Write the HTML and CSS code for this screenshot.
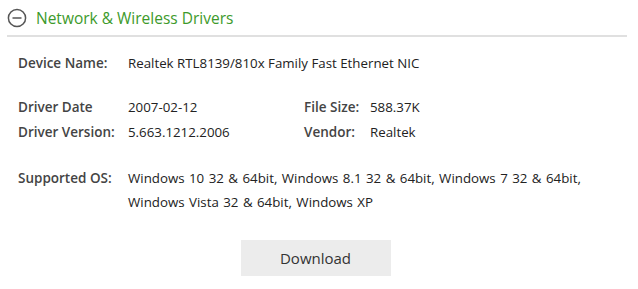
FILE: index.html
```html
<!DOCTYPE html>
<html lang="en">
<head>
    <meta charset="UTF-8">
    <title>Network & Wireless Drivers</title>
    <link rel="stylesheet" href="styles.css">
</head>
<body>
    <div class="driver-panel">
        <div class="panel-header">
            <svg class="toggle-icon" width="20" height="20" viewBox="0 0 20 20">
                <circle cx="10" cy="10" r="8.6" fill="none" stroke="#555" stroke-width="1.5"/>
                <line x1="5.5" y1="10" x2="14.5" y2="10" stroke="#555" stroke-width="1.5"/>
            </svg>
            <span class="panel-title">Network &amp; Wireless Drivers</span>
        </div>
        <div class="panel-body">
            <div class="info-row device-row">
                <span class="label">Device Name:</span>
                <span class="value">Realtek RTL8139/810x Family Fast Ethernet NIC</span>
            </div>
            <div class="info-grid">
                <span class="label">Driver Date</span>
                <span class="value">2007-02-12</span>
                <span class="label">File Size:</span>
                <span class="value">588.37K</span>
                <span class="label">Driver Version:</span>
                <span class="value">5.663.1212.2006</span>
                <span class="label">Vendor:</span>
                <span class="value">Realtek</span>
            </div>
            <div class="info-row os-row">
                <span class="label">Supported OS:</span>
                <span class="value">Windows 10 32 &amp; 64bit, Windows 8.1 32 &amp; 64bit, Windows 7 32 &amp; 64bit, Windows Vista 32 &amp; 64bit, Windows XP</span>
            </div>
            <div class="actions">
                <button class="download-button">Download</button>
            </div>
        </div>
    </div>
</body>
</html>
```

FILE: styles.css
```css
body, html {
    margin: 0;
    padding: 0;
    background-color: #fff;
    font-family: "Open Sans", "Noto Sans", Arial, sans-serif;
}
.driver-panel {
    width: 620px;
    padding: 0 0 0 7px;
}
.panel-header {
    display: flex;
    align-items: center;
    height: 35px;
    border-bottom: 2px solid #e0e0e0;
}
.toggle-icon {
    margin-right: 9px;
    margin-top: 1px;
}
.panel-title {
    color: #3d9a2b;
    font-size: 15.5px;
}
.panel-body {
    padding: 0 0 0 11px;
}
.label {
    color: #444;
    font-weight: 600;
    font-size: 13.5px;
}
.value {
    color: #222;
    font-size: 13.3px;
}
.info-row {
    display: flex;
}
.info-row .label {
    flex: 0 0 110px;
}
.device-row {
    margin-top: 14px;
    line-height: 24px;
}
.info-grid {
    display: grid;
    grid-template-columns: 110px 176px 66px 1fr;
    margin-top: 20px;
    line-height: 25px;
}
.os-row {
    margin-top: 21px;
    line-height: 24px;
}
.os-row .value {
    width: 470px;
    word-spacing: 1px;
}
.actions {
    display: flex;
    justify-content: center;
    margin-top: 26px;
    padding-right: 14px;
}
.download-button {
    width: 150px;
    height: 36px;
    background-color: #ececec;
    color: #333;
    border: none;
    font-family: inherit;
    font-size: 15px;
    cursor: pointer;
}
```
